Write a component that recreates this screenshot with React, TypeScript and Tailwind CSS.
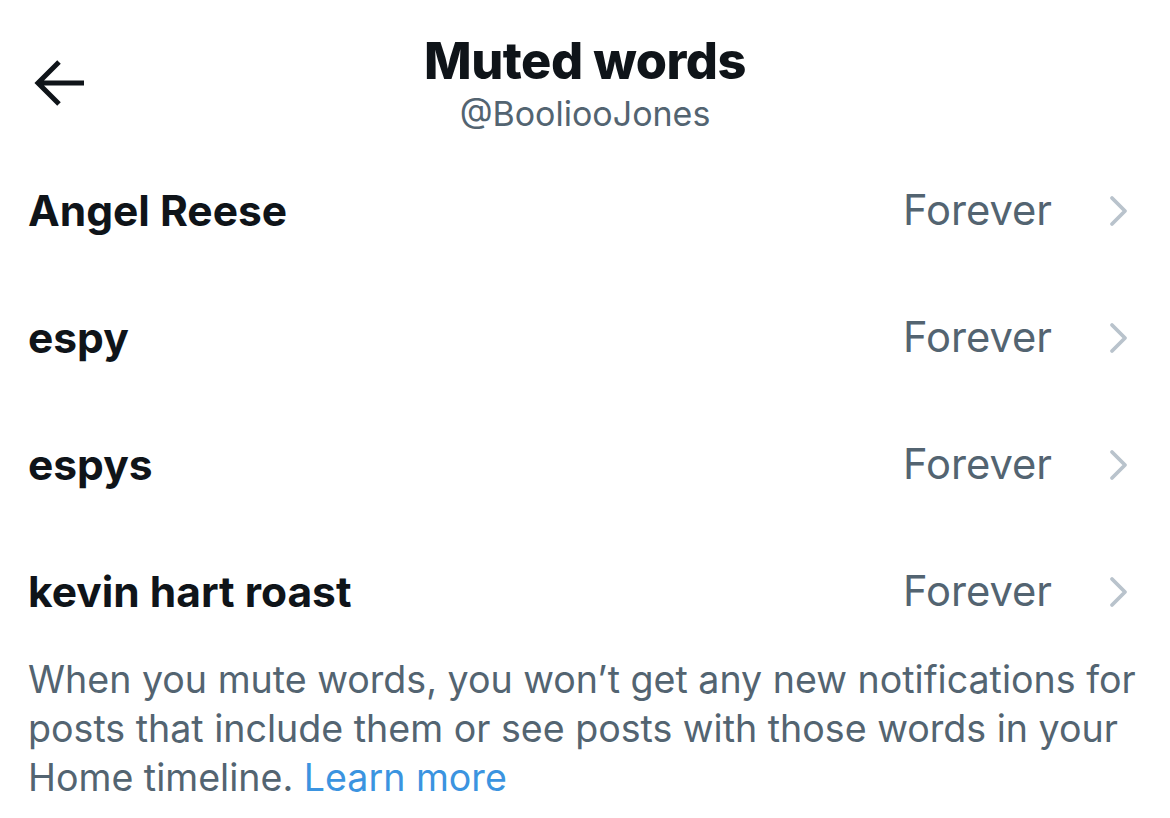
import React from "react";

const rows = ["Angel Reese", "espy", "espys", "kevin hart roast"];

function Chevron() {
  return (
    <svg width="22" height="34" viewBox="0 0 22 34" fill="none">
      <path d="M4 4 L17 17 L4 30" stroke="#b9c3cc" strokeWidth="3.8" strokeLinecap="round" strokeLinejoin="round" />
    </svg>
  );
}

export default function App() {
  return (
    <div className="w-[1170px] h-[818px] bg-white overflow-hidden" style={{ fontFamily: "Inter, 'Noto Sans', sans-serif" }}>
      <div className="relative h-[147px] flex flex-col items-center pt-[31px]">
        <div className="absolute left-[33px] top-[59px]">
          <svg width="54" height="48" viewBox="0 0 54 48" fill="none">
            <path d="M51 24 H5 M26 3 L5 24 L26 45" stroke="#0f1419" strokeWidth="5" strokeLinecap="butt" strokeLinejoin="miter" />
          </svg>
        </div>
        <div className="text-[50.5px] leading-[60px] font-extrabold text-[#0f1419] tracking-[-0.5px]">Muted words</div>
        <div className="text-[34px] leading-[40px] text-[#536471] mt-[3px]">@BooliooJones</div>
      </div>
      <div className="flex flex-col">
        {rows.map((r) => (
          <div key={r} className="h-[127px] flex items-center pl-[28px] pr-[40px]">
            <div className="flex-1 text-[42.5px] font-bold text-[#0f1419]">{r}</div>
            <div className="text-[41.7px] text-[#536471] mr-[56px]">Forever</div>
            <Chevron />
          </div>
        ))}
      </div>
      <div className="px-[28px] text-[37.6px] leading-[49px] text-[#536471]">
        When you mute words, you won’t get any new notifications for posts that include them or see posts with those words in your Home timeline. <span className="text-[#3b94e0]">Learn more</span>
      </div>
    </div>
  );
}
